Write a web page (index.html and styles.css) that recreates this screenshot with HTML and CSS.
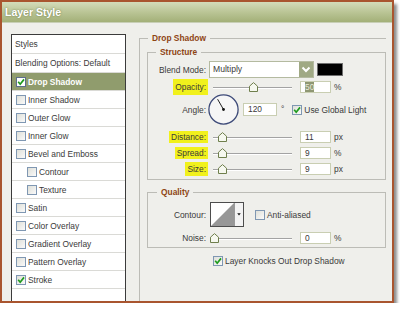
FILE: index.html
```html
<!DOCTYPE html>
<html lang="en">
<head>
    <meta charset="UTF-8">
    <title>Layer Style</title>
    <link rel="stylesheet" href="styles.css">
</head>
<body>

<div class="dialog">
    <div class="titlebar">Layer Style</div>

    <div class="dialog-body">
        <div class="style-list">
            <div class="item head">Styles</div>
            <div class="item head">Blending Options: Default</div>
            <div class="item active"><span class="check"><svg width="8" height="8" viewBox="0 0 8 8"><path d="M1.2 3.8 L3.2 6.2 L7 1.4" stroke="#1e9b1e" stroke-width="1.7" fill="none"/></svg></span>Drop Shadow</div>
            <div class="item"><span class="check"></span>Inner Shadow</div>
            <div class="item"><span class="check"></span>Outer Glow</div>
            <div class="item"><span class="check"></span>Inner Glow</div>
            <div class="item"><span class="check"></span>Bevel and Emboss</div>
            <div class="item sub"><span class="check"></span>Contour</div>
            <div class="item sub"><span class="check"></span>Texture</div>
            <div class="item"><span class="check"></span>Satin</div>
            <div class="item"><span class="check"></span>Color Overlay</div>
            <div class="item"><span class="check"></span>Gradient Overlay</div>
            <div class="item"><span class="check"></span>Pattern Overlay</div>
            <div class="item"><span class="check"><svg width="8" height="8" viewBox="0 0 8 8"><path d="M1.2 3.8 L3.2 6.2 L7 1.4" stroke="#1e9b1e" stroke-width="1.7" fill="none"/></svg></span>Stroke</div>
        </div>

        <div class="settings">
            <fieldset class="outer">
                <legend>Drop Shadow</legend>

                <fieldset class="box">
                    <legend class="structure">Structure</legend>

                    <div class="row r-blend">
                        <span class="lbl">Blend Mode:</span>
                        <div class="select">
                            <span class="select-text">Multiply</span>
                            <span class="select-arrow"><svg width="14" height="15" viewBox="0 0 14 15"><path d="M3.5 5.5 L7 9 L10.5 5.5" stroke="#fff" stroke-width="2" fill="none"/></svg></span>
                        </div>
                        <span class="swatch"></span>
                    </div>

                    <div class="row r-opacity">
                        <span class="lbl"><span class="hl hl-tall">Opacity:</span></span>
                        <div class="slider"><span class="thumb" style="left:36px"><svg width="9" height="10" viewBox="0 0 9 10"><path d="M0.5 4.2 L4.5 0.6 L8.5 4.2 L8.5 9.5 L0.5 9.5 Z" fill="#f6f8ef" stroke="#6f7f4c"/></svg></span></div>
                        <span class="num"><span class="sel">50</span></span>
                        <span class="unit">%</span>
                    </div>

                    <div class="row r-angle">
                        <span class="lbl">Angle:</span>
                        <svg class="dial" width="31" height="31" viewBox="0 0 31 31">
                            <circle cx="15.5" cy="15.5" r="14.6" fill="#f6f6f6" stroke="#3d4a78" stroke-width="1.3"/>
                            <line x1="15.5" y1="15.5" x2="9.6" y2="5.2" stroke="#222" stroke-width="1"/>
                            <circle cx="15.5" cy="15.5" r="1.4" fill="#111"/>
                        </svg>
                        <span class="num wide">120</span>
                        <span class="deg">°</span>
                        <span class="check global"><svg width="8" height="8" viewBox="0 0 8 8"><path d="M1.2 3.8 L3.2 6.2 L7 1.4" stroke="#1e9b1e" stroke-width="1.7" fill="none"/></svg></span>
                        <span class="check-text">Use Global Light</span>
                    </div>

                    <div class="row r-distance">
                        <span class="lbl"><span class="hl">Distance:</span></span>
                        <div class="slider"><span class="thumb" style="left:5px"><svg width="9" height="10" viewBox="0 0 9 10"><path d="M0.5 4.2 L4.5 0.6 L8.5 4.2 L8.5 9.5 L0.5 9.5 Z" fill="#f6f8ef" stroke="#6f7f4c"/></svg></span></div>
                        <span class="num">11</span>
                        <span class="unit">px</span>
                    </div>

                    <div class="row r-next">
                        <span class="lbl"><span class="hl">Spread:</span></span>
                        <div class="slider"><span class="thumb" style="left:5px"><svg width="9" height="10" viewBox="0 0 9 10"><path d="M0.5 4.2 L4.5 0.6 L8.5 4.2 L8.5 9.5 L0.5 9.5 Z" fill="#f6f8ef" stroke="#6f7f4c"/></svg></span></div>
                        <span class="num">9</span>
                        <span class="unit">%</span>
                    </div>

                    <div class="row r-next">
                        <span class="lbl"><span class="hl hl-size">Size:</span></span>
                        <div class="slider"><span class="thumb" style="left:5px"><svg width="9" height="10" viewBox="0 0 9 10"><path d="M0.5 4.2 L4.5 0.6 L8.5 4.2 L8.5 9.5 L0.5 9.5 Z" fill="#f6f8ef" stroke="#6f7f4c"/></svg></span></div>
                        <span class="num">9</span>
                        <span class="unit">px</span>
                    </div>
                </fieldset>

                <fieldset class="box quality">
                    <legend class="quality-legend">Quality</legend>

                    <div class="row r-contour">
                        <span class="lbl">Contour:</span>
                        <div class="contour">
                            <svg width="23" height="23" viewBox="0 0 23 23">
                                <rect width="23" height="23" fill="#fff"/>
                                <path d="M0 23 L23 0 L23 23 Z" fill="#979797"/>
                            </svg>
                            <span class="contour-drop"><svg width="9" height="23" viewBox="0 0 9 23"><path d="M2.5 10 L6.5 10 L4.5 12.5 Z" fill="#111"/></svg></span>
                        </div>
                        <span class="check anti"></span>
                        <span class="check-text">Anti-aliased</span>
                    </div>

                    <div class="row r-noise">
                        <span class="lbl">Noise:</span>
                        <div class="slider"><span class="thumb" style="left:-3px"><svg width="9" height="10" viewBox="0 0 9 10"><path d="M0.5 4.2 L4.5 0.6 L8.5 4.2 L8.5 9.5 L0.5 9.5 Z" fill="#f6f8ef" stroke="#6f7f4c"/></svg></span></div>
                        <span class="num">0</span>
                        <span class="unit">%</span>
                    </div>
                </fieldset>

                <div class="row knock">
                    <span class="check"><svg width="8" height="8" viewBox="0 0 8 8"><path d="M1.2 3.8 L3.2 6.2 L7 1.4" stroke="#1e9b1e" stroke-width="1.7" fill="none"/></svg></span>
                    <span class="check-text">Layer Knocks Out Drop Shadow</span>
                </div>
            </fieldset>
        </div>
    </div>
</div>

</body>
</html>
```

FILE: styles.css
```css
* {
    margin: 0;
    padding: 0;
    box-sizing: border-box;
}

body {
    background: #fff;
    font-family: "Liberation Sans", Arial, sans-serif;
    font-size: 8.4px;
    color: #3a3a3a;
}

.dialog {
    width: 394px;
    height: 303px;
    border: 2px solid #a9552f;
    background: #efefeb;
    box-shadow: 3px 4px 3px rgba(0, 0, 0, 0.45);
    display: flex;
    flex-direction: column;
}

.titlebar {
    height: 21px;
    flex: none;
    background: linear-gradient(180deg, #d4dcba 0%, #b8c393 55%, #a3b078 100%);
    border-bottom: 1px solid #c8cfb6;
    color: #fff;
    font-weight: bold;
    font-size: 10.5px;
    line-height: 20px;
    padding-left: 3px;
    text-shadow: 0 0 2px #6b7848;
}

.dialog-body {
    flex: 1;
    display: flex;
    min-height: 0;
}

/* left list of styles */
.style-list {
    margin: 11px 0 0 9px;
    width: 115px;
    flex: none;
    border: 1px solid #3b3b3b;
    border-bottom: 0;
    background: #fff;
}

.item {
    height: 18px;
    border-bottom: 1px solid #dadad6;
    display: flex;
    align-items: center;
    gap: 2px;
    padding-left: 4px;
    white-space: nowrap;
}

.item.head {
    height: 19px;
    padding-left: 3px;
}

.item.sub {
    padding-left: 15px;
}

.item.active {
    background: #909c6d;
    color: #fff;
    font-weight: bold;
}

.check {
    width: 10px;
    height: 10px;
    flex: none;
    border: 1px solid #7f97b2;
    background: linear-gradient(135deg, #dedfd8 0%, #fafafa 100%);
    display: flex;
    align-items: center;
    justify-content: center;
}

.item.active .check {
    background: #fff;
    border-color: #5d6e8a;
}

.check-text {
    margin-left: 2px;
    white-space: nowrap;
}

/* right settings */
.settings {
    flex: 1;
    margin: 10px 6px 0 13px;
    display: flex;
    flex-direction: column;
    min-width: 0;
}

fieldset {
    border: 1px solid #bcbcb6;
    min-width: 0;
}

legend {
    font-weight: bold;
    color: #8e4514;
    padding: 0 4px;
    line-height: 10px;
}

.outer {
    flex: 1;
    border-right: 0;
    border-bottom: 0;
    padding: 0 0 0 7px;
}

.outer > legend {
    margin-left: 1px;
}

.box {
    margin-top: 4px;
    padding: 0 0 4px 0;
}

.structure {
    margin-left: 8px;
}

.quality {
    margin-top: 7px;
    padding-bottom: 3px;
}

.quality-legend {
    margin-left: 9px;
}

.row {
    display: flex;
    align-items: center;
}

.lbl {
    width: 58px;
    flex: none;
    text-align: right;
    white-space: nowrap;
}

.hl {
    background: #f1f11c;
    padding: 1px 2px;
    margin-right: -2px;
}

.hl-tall {
    padding: 3px 2px;
}

.hl-size {
    padding: 2px 2px;
}

.r-blend {
    margin-top: 4px;
    height: 17px;
}

.select {
    margin-left: 3px;
    width: 105px;
    height: 17px;
    border: 1px solid #b4baa0;
    background: #fff;
    display: flex;
}

.select-text {
    flex: 1;
    padding-left: 3px;
    line-height: 15px;
    font-size: 8.6px;
}

.select-arrow {
    width: 14px;
    background: #a0a984;
    display: flex;
}

.swatch {
    margin-left: 3px;
    width: 26px;
    height: 13px;
    background: #000;
    border: 1px solid #6e6e6e;
}

.r-opacity {
    margin-top: 2px;
    height: 13px;
}

.slider {
    position: relative;
    margin-left: 7px;
    width: 79px;
    height: 10px;
    flex: none;
}

.slider::before {
    content: "";
    position: absolute;
    left: 0;
    right: 0;
    top: 5px;
    border-top: 1px solid #a3a3a3;
    border-bottom: 1px solid #fff;
}

.thumb {
    position: absolute;
    top: 0;
    width: 9px;
    height: 10px;
    display: flex;
}

.num {
    margin-left: 8px;
    width: 31px;
    height: 12px;
    flex: none;
    border: 1px solid #c9ceb2;
    background: #fff;
    padding-left: 4px;
    line-height: 10px;
}

.num.wide {
    margin-left: 4px;
    width: 34px;
    height: 13px;
    line-height: 11px;
}

.sel {
    background: #8f9773;
    color: #e8ead8;
}

.unit {
    margin-left: 3px;
}

.r-angle {
    margin-top: 1px;
    height: 31px;
}

.dial {
    margin-left: 2px;
    flex: none;
}

.deg {
    margin-left: 4px;
    align-self: flex-start;
    margin-top: 10px;
}

.check.global {
    margin-left: 8px;
}

.r-distance {
    margin-top: 5px;
    height: 13px;
}

.r-next {
    margin-top: 3px;
    height: 13px;
}

.r-contour {
    margin-top: 5px;
    height: 25px;
}

.contour {
    margin-left: 4px;
    height: 25px;
    width: 34px;
    border: 1px solid #4d4d4d;
    background: #fff;
    display: flex;
}

.contour-drop {
    width: 9px;
    border-left: 1px solid #9a9a9a;
    background: #f3f3f3;
    display: flex;
}

.check.anti {
    margin-left: 11px;
}

.r-noise {
    margin-top: 5px;
    height: 12px;
}

.knock {
    margin-top: 7px;
    height: 11px;
    padding-left: 66px;
}
```
